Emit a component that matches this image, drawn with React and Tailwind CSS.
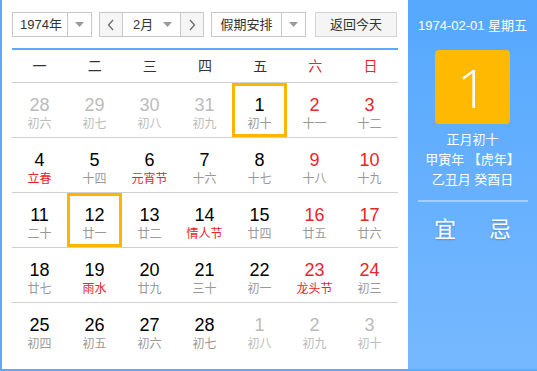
import React from "react";

const FONT = { fontFamily: '"Liberation Sans", "Noto Sans CJK SC", sans-serif' };

const rows = [
  [
    { n: 28, l: "初六", g: true },
    { n: 29, l: "初七", g: true },
    { n: 30, l: "初八", g: true },
    { n: 31, l: "初九", g: true },
    { n: 1, l: "初十", sel: true },
    { n: 2, l: "十一", we: true },
    { n: 3, l: "十二", we: true },
  ],
  [
    { n: 4, l: "立春", fest: true },
    { n: 5, l: "十四" },
    { n: 6, l: "元宵节", fest: true },
    { n: 7, l: "十六" },
    { n: 8, l: "十七" },
    { n: 9, l: "十八", we: true },
    { n: 10, l: "十九", we: true },
  ],
  [
    { n: 11, l: "二十" },
    { n: 12, l: "廿一", sel: true },
    { n: 13, l: "廿二" },
    { n: 14, l: "情人节", fest: true },
    { n: 15, l: "廿四" },
    { n: 16, l: "廿五", we: true },
    { n: 17, l: "廿六", we: true },
  ],
  [
    { n: 18, l: "廿七" },
    { n: 19, l: "雨水", fest: true },
    { n: 20, l: "廿九" },
    { n: 21, l: "三十" },
    { n: 22, l: "初一" },
    { n: 23, l: "龙头节", we: true, fest: true },
    { n: 24, l: "初三", we: true },
  ],
  [
    { n: 25, l: "初四" },
    { n: 26, l: "初五" },
    { n: 27, l: "初六" },
    { n: 28, l: "初七" },
    { n: 1, l: "初八", g: true },
    { n: 2, l: "初九", g: true },
    { n: 3, l: "初十", g: true },
  ],
];

const Tri = () => (
  <svg width="9" height="5" viewBox="0 0 9 5">
    <polygon points="0,0 9,0 4.5,5" fill="#9a9a9a" />
  </svg>
);

const Chev = ({ dir }) => (
  <svg width="8" height="12" viewBox="0 0 8 12">
    <polyline
      points={dir === "l" ? "6,1 1.5,6 6,11" : "2,1 6.5,6 2,11"}
      fill="none"
      stroke="#666"
      strokeWidth="1.2"
    />
  </svg>
);

function Cell({ d }) {
  let numC = "text-black";
  let lunC = "text-[#999]";
  if (d.g) {
    numC = "text-[#bbb]";
    lunC = "text-[#bbb]";
  } else {
    if (d.we) numC = "text-[#e8252b]";
    if (d.fest) lunC = "text-[#e8252b]";
  }
  return (
    <div className="relative flex h-[54px] w-[55px] flex-col items-center">
      {d.sel && (
        <span className="absolute left-0 top-0 h-[54px] w-[55px] border-[3px] border-[#ffb400]" />
      )}
      <div className={`mt-[12px] text-[18px] leading-[20px] ${numC}`}>{d.n}</div>
      <div className={`mt-[2px] text-[12px] leading-[14px] ${lunC}`}>{d.l}</div>
    </div>
  );
}

export default function App() {
  const wk = ["一", "二", "三", "四", "五", "六", "日"];
  return (
    <div
      className="flex h-[371px] w-[537px] border-b-2 border-l-2 border-[#5aa9fd] bg-white"
      style={FONT}
    >
      <div className="w-[406px] bg-white px-[10px] pt-[12px]">
        <div className="flex h-[25px] text-[13px] text-[#333]">
          <div className="flex h-[25px] w-[80px] border border-[#c8c8c8]">
            <div className="flex w-[54px] items-center justify-center pl-[2px]">1974年</div>
            <div className="flex flex-1 items-center justify-center border-l border-[#c8c8c8]">
              <Tri />
            </div>
          </div>
          <div className="ml-[7px] flex h-[25px] w-[105px] border border-[#c8c8c8]">
            <div className="flex w-[22px] items-center justify-center bg-[#f5f5f5]">
              <Chev dir="l" />
            </div>
            <div className="flex w-[59px] items-center border-x border-[#c8c8c8] pl-[10px] pr-[8px]">
              <span className="flex-1">2月</span>
              <Tri />
            </div>
            <div className="flex flex-1 items-center justify-center bg-[#f5f5f5]">
              <Chev dir="r" />
            </div>
          </div>
          <div className="ml-[7px] flex h-[25px] w-[95px] border border-[#c8c8c8]">
            <div className="flex w-[69px] items-center justify-center">假期安排</div>
            <div className="flex flex-1 items-center justify-center border-l border-[#c8c8c8]">
              <Tri />
            </div>
          </div>
          <div className="ml-[9px] flex h-[25px] w-[82px] items-center justify-center border border-[#d4d4d4] bg-[#f5f5f5]">
            返回今天
          </div>
        </div>
        <div className="mt-[11px] h-[2px] bg-[#5aa9fd]" />
        <div className="grid h-[32px] grid-cols-7 items-center text-center text-[14px] text-[#333]">
          {wk.map((w, i) => (
            <div key={w} className={i >= 5 ? "text-[#e8252b]" : ""}>
              {w}
            </div>
          ))}
        </div>
        {rows.map((r, i) => (
          <div key={i} className="flex border-t border-[#d0d0d0]">
            {r.map((d, j) => (
              <Cell key={j} d={d} />
            ))}
          </div>
        ))}
      </div>
      <div className="flex flex-1 flex-col items-center bg-gradient-to-b from-[#55a8fd] to-[#76b8ff] text-white">
        <div className="mt-[18px] text-[13px] leading-[16px]">1974-02-01 星期五</div>
        <div
          className="mt-[16px] flex h-[74px] w-[75px] items-center justify-center rounded-[4px] bg-[#ffb900] text-[54px] font-light leading-none text-white"
          style={{ fontFamily: '"Open Sans", "Liberation Sans", sans-serif' }}
        >
          1
        </div>
        <div className="mt-[6px] flex flex-col items-center text-[13px] leading-[20px]">
          <div>正月初十</div>
          <div>甲寅年 【虎年】</div>
          <div>乙丑月 癸酉日</div>
        </div>
        <div className="mt-[10px] h-[2px] w-[110px] bg-white/40" />
        <div
          className="mt-[15px] flex gap-[33px] text-[22px] leading-[26px]"
          style={{ textShadow: "0 1px 2px rgba(0,0,0,0.2)" }}
        >
          <span>宜</span>
          <span>忌</span>
        </div>
      </div>
    </div>
  );
}
